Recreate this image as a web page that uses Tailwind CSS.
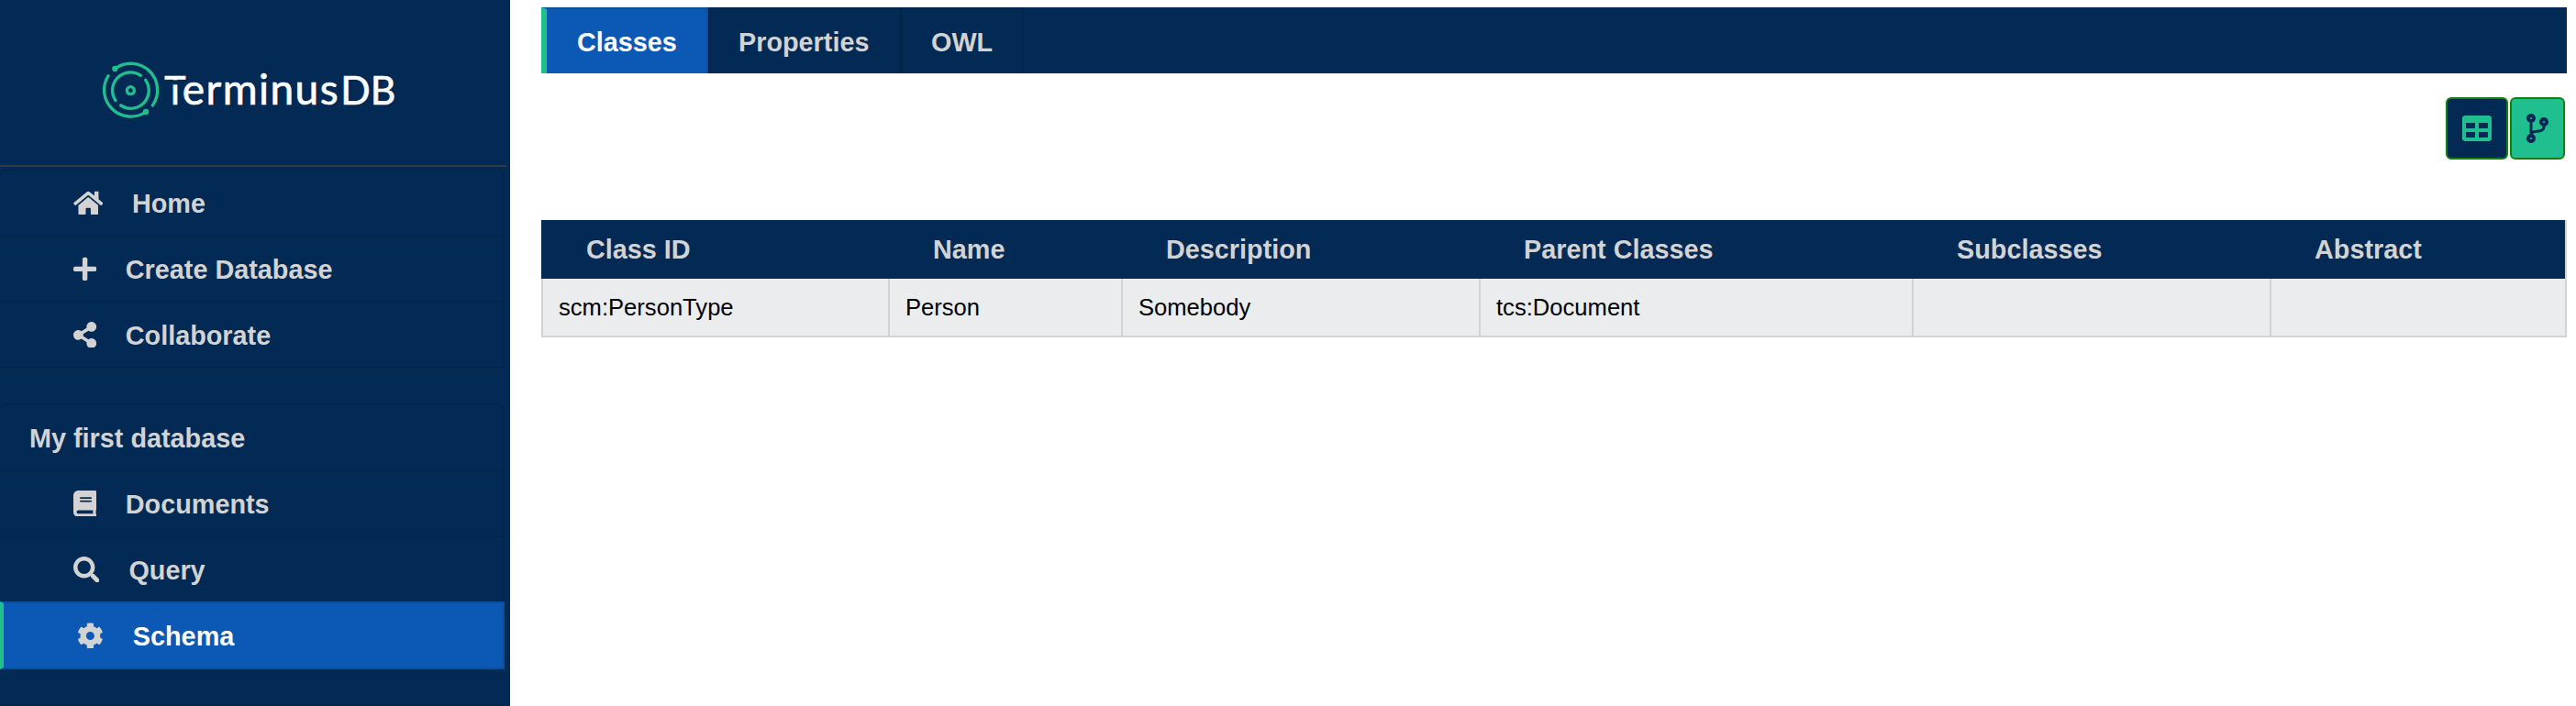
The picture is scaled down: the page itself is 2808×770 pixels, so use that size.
<!DOCTYPE html>
<html lang="en">
<head>
<meta charset="utf-8">
<title>TerminusDB</title>
<script src="https://cdn.jsdelivr.net/npm/@tailwindcss/browser@4"></script>
</head>
<body class="flex h-[770px] w-[2808px] overflow-hidden bg-white font-['Liberation_Sans',sans-serif] text-[28.8px] leading-none">
<aside class="h-full w-[556px] shrink-0 bg-[#032a54] font-bold text-[#d3d3d3]">
  <div class="h-[180px] pl-[90px] pt-[50px]">
    <svg class="block h-[100px] w-[360px]" viewBox="0 0 1080 300" fill="none">
      <g stroke="#20bf8f" stroke-width="10" stroke-linecap="round">
        <path d="M106 75A87 87 0 0 1 229 195"/>
        <path d="M207 216A87 87 0 0 1 84 98"/>
        <path d="M108 179A59 59 0 0 1 190 97"/>
        <path d="M206 112A59 59 0 0 1 125 195"/>
        <circle cx="157" cy="146" r="12"/>
      </g>
      <circle cx="106" cy="75" r="9.500" fill="#20bf8f"/>
      <circle cx="207" cy="216" r="9.500" fill="#20bf8f"/>
      <text y="192" fill="#fff" stroke="#fff" stroke-width="2" class="font-['Lato',sans-serif] font-normal"><tspan x="268" font-size="128" textLength="70" lengthAdjust="spacingAndGlyphs">T</tspan><tspan x="326" font-size="138" textLength="510" lengthAdjust="spacing">erminus</tspan><tspan x="844" font-size="128" textLength="180" lengthAdjust="spacing">DB</tspan></text>
      <rect x="290" y="112" width="26" height="15" fill="#032a54"/>
    </svg>
  </div>
  <div class="h-0.5 w-[552px] bg-[#303a4a]"></div>
  <nav class="mt-0.5 w-[550px] rounded-t-lg border-r-2 border-t-2 border-[#02254b]">
    <a class="flex h-[72px] items-center gap-8 border-b-2 border-[#02254b] pl-[79.600px]">
      <svg class="h-[28.800px] w-[32.400px]" viewBox="0 0 576 512" fill="currentColor"><path d="M280.370 148.260L96 300.110V464a16 16 0 0 0 16 16l112.060-.29a16 16 0 0 0 15.920-16V368a16 16 0 0 1 16-16h64a16 16 0 0 1 16 16v95.640a16 16 0 0 0 16 16.050L464 480a16 16 0 0 0 16-16V300L295.670 148.260a12.190 12.190 0 0 0-15.300 0zM571.600 251.470L488 182.560V44.050a12 12 0 0 0-12-12h-56a12 12 0 0 0-12 12v72.610L318.470 43a48 48 0 0 0-61 0L4.340 251.470a12 12 0 0 0-1.600 16.900l25.500 31A12 12 0 0 0 45.150 301l235.220-193.740a12.190 12.190 0 0 1 15.300 0L530.900 301a12 12 0 0 0 16.900-1.600l25.500-31a12 12 0 0 0-1.700-16.930z"/></svg>
      <span class="pt-[3px]">Home</span></a>
    <a class="flex h-[72px] items-center gap-8 border-b-2 border-[#02254b] pl-[79.600px]">
      <svg class="h-[28.800px] w-[25.200px]" viewBox="0 0 448 512" fill="currentColor"><path d="M416 208H272V64c0-17.670-14.330-32-32-32h-32c-17.670 0-32 14.330-32 32v144H32c-17.670 0-32 14.330-32 32v32c0 17.670 14.330 32 32 32h144v144c0 17.670 14.330 32 32 32h32c17.670 0 32-14.330 32-32V304h144c17.670 0 32-14.330 32-32v-32c0-17.670-14.330-32-32-32z"/></svg>
      <span class="pt-[3px]">Create Database</span></a>
    <a class="flex h-[72px] items-center gap-8 border-b-2 border-[#02254b] pl-[79.600px]">
      <svg class="h-[28.800px] w-[25.200px]" viewBox="0 0 448 512" fill="currentColor"><path d="M352 320c-22.608 0-43.387 7.819-59.790 20.895l-102.486-64.054a96.551 96.551 0 0 0 0-41.683l102.486-64.054C308.613 184.181 329.392 192 352 192c53.019 0 96-42.981 96-96S405.019 0 352 0s-96 42.981-96 96c0 7.158.79 14.130 2.276 20.841L155.790 180.895C139.387 167.819 118.608 160 96 160c-53.019 0-96 42.981-96 96s42.981 96 96 96c22.608 0 43.387-7.819 59.790-20.895l102.486 64.054A96.301 96.301 0 0 0 256 416c0 53.019 42.981 96 96 96s96-42.981 96-96-42.981-96-96-96z"/></svg>
      <span class="pt-[3px]">Collaborate</span></a>
  </nav>
  <nav class="mt-[38px] w-[550px] rounded-t-lg border-r-2 border-t-2 border-[#02254b]">
    <div class="flex h-[72px] items-center border-b-2 border-[#02254b] pl-8"><span class="pt-[3px]">My first database</span></div>
    <a class="flex h-[72px] items-center gap-8 border-b-2 border-[#02254b] pl-[79.600px]">
      <svg class="h-[28.800px] w-[25.200px]" viewBox="0 0 448 512" fill="currentColor"><path d="M448 360V24c0-13.300-10.700-24-24-24H96C43 0 0 43 0 96v320c0 53 43 96 96 96h328c13.300 0 24-10.700 24-24v-16c0-7.500-3.500-14.300-8.900-18.700-4.200-15.400-4.200-59.300 0-74.700 5.400-4.300 8.900-11.100 8.900-18.600zM128 134c0-3.300 2.700-6 6-6h212c3.300 0 6 2.700 6 6v20c0 3.300-2.700 6-6 6H134c-3.300 0-6-2.700-6-6v-20zm0 64c0-3.300 2.700-6 6-6h212c3.300 0 6 2.700 6 6v20c0 3.300-2.700 6-6 6H134c-3.300 0-6-2.700-6-6v-20zm253.400 250H96c-17.700 0-32-14.300-32-32 0-17.600 14.400-32 32-32h285.400c-1.900 17.100-1.900 46.900 0 64z"/></svg>
      <span class="pt-[3px]">Documents</span></a>
    <a class="flex h-[72px] items-center gap-8 border-b-2 border-[#02254b] pl-[79.600px]">
      <svg class="size-[28.800px]" viewBox="0 0 512 512" fill="currentColor"><path d="M505 442.700L405.300 343c-4.500-4.500-10.600-7-17-7H372c27.600-35.300 44-79.700 44-128C416 93.100 322.900 0 208 0S0 93.100 0 208s93.100 208 208 208c48.300 0 92.700-16.400 128-44v16.300c0 6.400 2.500 12.500 7 17l99.700 99.700c9.400 9.400 24.600 9.400 33.900 0l28.300-28.300c9.400-9.400 9.400-24.600.1-34zM208 336c-70.700 0-128-57.200-128-128 0-70.700 57.200-128 128-128 70.700 0 128 57.200 128 128 0 70.700-57.200 128-128 128z"/></svg>
      <span class="pt-[3px]">Query</span></a>
    <a class="-mr-0.5 -mt-0.5 flex h-[74px] items-center gap-8 border-2 border-l-4 border-[#0b4f9f] border-l-[#20bf8f] bg-[#0c58b5] pl-20">
      <svg class="size-[28.800px]" viewBox="0 0 512 512" fill="currentColor"><path d="M487.400 315.700l-42.600-24.600c4.300-23.200 4.300-47 0-70.200l42.600-24.600c4.900-2.800 7.100-8.600 5.500-14-11.100-35.600-30-67.800-54.700-94.600-3.800-4.100-10-5.100-14.800-2.300L380.800 110c-17.900-15.400-38.500-27.300-60.800-35.100V25.800c0-5.600-3.900-10.500-9.400-11.700-36.700-8.200-74.300-7.800-109.200 0-5.500 1.200-9.400 6.100-9.400 11.700V75c-22.200 7.900-42.800 19.800-60.800 35.100L88.700 85.500c-4.900-2.800-11-1.900-14.800 2.300-24.700 26.700-43.600 58.900-54.700 94.600-1.700 5.400.6 11.200 5.500 14L67.300 221c-4.300 23.200-4.300 47 0 70.200l-42.600 24.600c-4.900 2.800-7.100 8.600-5.500 14 11.100 35.600 30 67.800 54.700 94.600 3.800 4.100 10 5.100 14.800 2.300l42.600-24.600c17.900 15.400 38.500 27.300 60.800 35.100v49.200c0 5.600 3.900 10.500 9.400 11.700 36.700 8.200 74.300 7.800 109.200 0 5.500-1.200 9.400-6.100 9.400-11.700v-49.200c22.200-7.900 42.800-19.800 60.800-35.100l42.600 24.600c4.900 2.800 11 1.900 14.800-2.300 24.700-26.700 43.600-58.900 54.700-94.600 1.500-5.500-.7-11.300-5.600-14.100zM256 336c-44.100 0-80-35.900-80-80s35.900-80 80-80 80 35.900 80 80-35.900 80-80 80z"/></svg>
      <span class="pt-[3px] text-white">Schema</span></a>
  </nav>
  <div class="mt-[38px] h-0.5 w-[550px] bg-[#02254b]"></div>
</aside>
<main class="flex flex-1 flex-col pl-[34px] pr-[10px] pt-2">
  <div class="flex h-[72px] shrink-0 bg-[#032a54] font-bold text-[#d3d3d3]">
    <a class="flex w-[182px] items-center border-l-[6px] border-r-2 border-t-2 border-[#0b4f9f] border-l-[#20bf8f] bg-[#0c58b5] pl-[33px] text-white"><span class="pt-0.5">Classes</span></a>
    <a class="flex w-[210px] items-center border-x-2 border-t-2 border-[#02254b] pl-[31px]"><span class="pt-0.5">Properties</span></a>
    <a class="flex w-[134px] items-center border-x-2 border-t-2 border-[#02254b] pl-[31px]"><span class="pt-0.5">OWL</span></a>
  </div>
  <div class="mt-[26px] flex h-[68px] shrink-0 justify-end gap-0.5 pr-0.5">
    <button class="flex w-[68px] items-center justify-center rounded-md border-2 border-[#108010] bg-[#032a54] text-[#20bf8f]">
      <svg class="size-8" viewBox="0 0 512 512" fill="currentColor"><path d="M464 32H48C21.490 32 0 53.490 0 80v352c0 26.510 21.490 48 48 48h416c26.510 0 48-21.490 48-48V80c0-26.510-21.490-48-48-48zM224 416H64v-96h160v96zm0-160H64v-96h160v96zm224 160H288v-96h160v96zm0-160H288v-96h160v96z"/></svg>
    </button>
    <button class="flex w-[60px] items-center justify-center rounded-md border-2 border-[#108010] bg-[#20bf8f] text-[#032a54]">
      <svg class="h-8 w-6" viewBox="0 0 384 512" fill="currentColor"><path d="M384 144c0-44.200-35.800-80-80-80s-80 35.800-80 80c0 36.400 24.300 67.100 57.500 76.800-.6 16.100-4.200 28.500-11 36.900-15.400 19.200-49.300 22.400-85.200 25.700-28.200 2.600-57.400 5.400-81.300 16.900v-144c32.500-10.200 56-40.500 56-76.300 0-44.200-35.800-80-80-80S0 35.800 0 80c0 35.800 23.500 66.100 56 76.300v199.300C23.500 365.900 0 396.200 0 432c0 44.200 35.800 80 80 80s80-35.800 80-80c0-34-21.200-63.100-51.200-74.600 3.100-5.200 7.800-9.800 14.900-13.400 16.200-8.200 40.400-10.400 66.100-12.800 42.200-3.900 90-8.400 118.200-43.400 14-17.400 21.100-39.800 21.600-67.900 31.600-10.800 54.400-40.700 54.400-75.900zM80 64c8.800 0 16 7.200 16 16s-7.200 16-16 16-16-7.200-16-16 7.200-16 16-16zm0 384c-8.800 0-16-7.200-16-16s7.200-16 16-16 16 7.200 16 16-7.200 16-16 16zm224-320c8.800 0 16 7.200 16 16s-7.200 16-16 16-16-7.200-16-16 7.200-16 16-16z"/></svg>
    </button>
  </div>
  <div class="mt-16 border-t-2 border-[#f5f6f6]">
    <div class="grid h-16 grid-cols-[378px_254px_390px_472px_390px_322px] items-center border-r-2 border-[#d3d3d3] bg-[#032a54] bg-clip-padding font-bold text-[#d3d3d3] *:h-16 *:content-center *:pl-[49px]">
      <div>Class ID</div><div>Name</div><div>Description</div><div>Parent Classes</div><div>Subclasses</div><div>Abstract</div>
    </div>
    <div class="grid h-16 grid-cols-[378px_254px_390px_472px_390px_322px] border-b-2 border-r-2 border-[#d3d3d3] bg-[#ebecee] text-[25.600px] text-black *:content-center *:border-l-2 *:border-[#d3d3d3] *:pl-[17px] *:pt-0.5">
      <div>scm:PersonType</div><div>Person</div><div>Somebody</div><div>tcs:Document</div><div></div><div></div>
    </div>
  </div>
</main>
</body>
</html>
